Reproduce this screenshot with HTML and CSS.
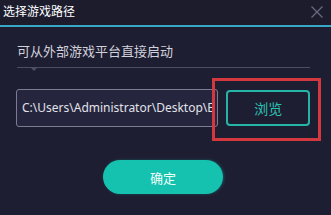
FILE: index.html
```html
<!DOCTYPE html>
<html>
<head>
<meta charset="utf-8">
<link rel="stylesheet" href="styles.css">
</head>
<body>
<div class="dialog">
  <div class="titlebar">
    <span class="title">选择游戏路径</span>
    <svg class="close" width="12" height="12" viewBox="0 0 12 12"><path d="M0.5 0.5 L11.5 11.5 M11.5 0.5 L0.5 11.5" stroke="#6b6b82" stroke-width="1.2" fill="none"/></svg>
  </div>
  <div class="accent"></div>
  <div class="content">
    <div class="subtitle">可从外部游戏平台直接启动</div>
    <div class="sep"></div>
    <div class="row">
      <div class="path"><span class="path-text">C:\Users\Administrator\Desktop\E</span></div>
      <div class="browse">浏览</div>
      <div class="highlight"></div>
    </div>
    <div class="actions">
      <div class="ok">确定</div>
    </div>
  </div>
</div>
</body>
</html>
```
FILE: styles.css
```css
* { box-sizing: border-box; }
html, body { margin: 0; padding: 0; }
body {
  width: 331px;
  height: 215px;
  background: #1e1e32;
  font-family: "Noto Sans CJK SC", "Noto Sans", sans-serif;
  overflow: hidden;
}
.dialog { display: flex; flex-direction: column; height: 215px; }
.titlebar {
  height: 25px;
  background: #1c1c2d;
  display: flex;
  align-items: center;
  justify-content: space-between;
  padding: 0 8px 3px 3px;
}
.title { color: #ffffff; font-size: 12px; line-height: 14px; }
.close { display: block; margin-top: 1px; }
.accent { height: 2px; background: #38a8c6; }
.content { padding: 0 21px 0 16px; display: flex; flex-direction: column; }
.subtitle {
  margin-top: 15px;
  color: #d2d2dc;
  font-size: 13px;
  line-height: 18px;
  padding-left: 1px;
}
.sep {
  position: relative;
  margin-top: 7px;
  margin-left: 1px;
  height: 1px;
  background: #4e4e62;
}
.sep::after {
  content: "";
  position: absolute;
  left: 14px;
  top: 1px;
  border-left: 3px solid transparent;
  border-right: 3px solid transparent;
  border-top: 3px solid #4e4e62;
}
.row {
  position: relative;
  margin-top: 21px;
  display: flex;
  align-items: center;
  gap: 8px;
}
.path {
  width: 203px;
  height: 38px;
  border: 1px solid #7c7c94;
  border-radius: 3px;
  background: #25253d;
  display: flex;
  align-items: center;
  padding-left: 5px;
  overflow: hidden;
}
.path-text {
  color: #e2e2ea;
  font-family: "Noto Sans", "Liberation Sans", sans-serif;
  font-size: 12px;
  line-height: 16px;
  white-space: nowrap;
}
.browse {
  width: 84px;
  height: 36px;
  border: 2px solid #25b5a8;
  border-radius: 4px;
  color: #2cc2b2;
  font-size: 14px;
  display: flex;
  align-items: center;
  justify-content: center;
}
.highlight {
  position: absolute;
  left: 196px;
  top: -11px;
  width: 109px;
  height: 63px;
  border: 3px solid #d4383f;
}
.actions {
  margin-top: 33px;
  display: flex;
  padding-left: 87px;
}
.ok {
  width: 120px;
  height: 34px;
  border-radius: 17px;
  background: #15c2b0;
  color: #f2fffd;
  font-size: 13px;
  display: flex;
  align-items: center;
  justify-content: center;
  box-shadow: 1px 0 3px rgba(20, 190, 170, 0.35);
}
```
